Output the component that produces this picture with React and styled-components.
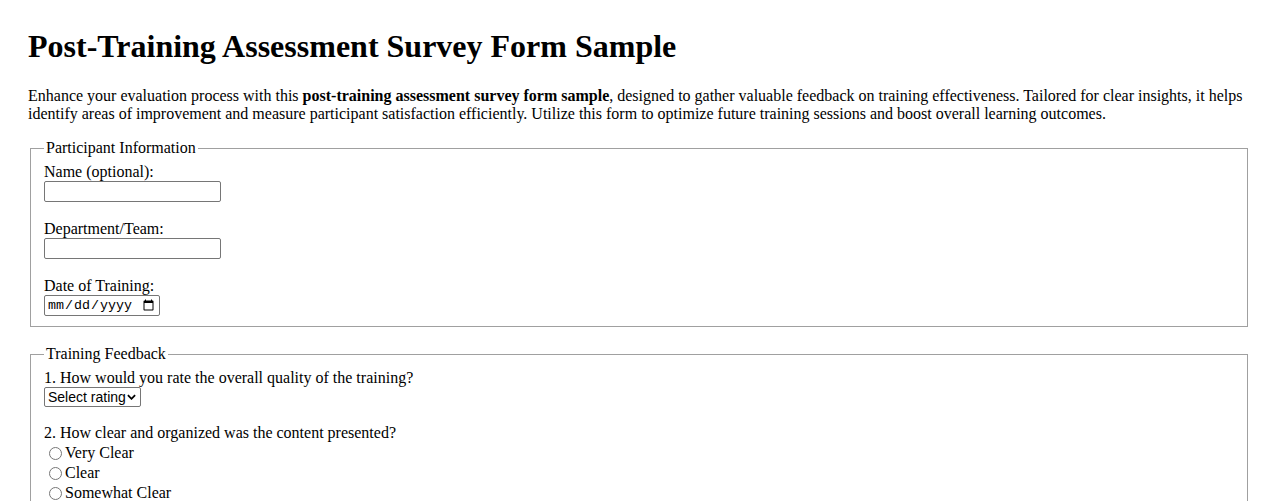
import React from 'react'
import styled, { createGlobalStyle } from 'styled-components';

const GlobalStyle = createGlobalStyle`
  body {
    margin: 0;
    padding: 28px;
    background: #fff;
    color: #000;
    font-family: "Liberation Serif", "Times New Roman", serif;
    font-size: 16px;
  }
`;

const App = () => {
    return (
        <>
            <GlobalStyle />
            <Page>
                <Title>Post-Training Assessment Survey Form Sample</Title>
                <Intro>
                    Enhance your evaluation process with this <strong>post-training assessment survey form sample</strong>, designed to gather valuable feedback on training effectiveness. Tailored for clear insights, it helps identify areas of improvement and measure participant satisfaction efficiently. Utilize this form to optimize future training sessions and boost overall learning outcomes.
                </Intro>
                <form>
                    <Section>
                        <Legend>Participant Information</Legend>
                        <Field>
                            <Label htmlFor="name">Name (optional):</Label>
                            <TextInput id="name" type="text" />
                        </Field>
                        <Field>
                            <Label htmlFor="dept">Department/Team:</Label>
                            <TextInput id="dept" type="text" />
                        </Field>
                        <Field>
                            <Label htmlFor="date">Date of Training:</Label>
                            <DateInput id="date" type="date" />
                        </Field>
                    </Section>

                    <Section>
                        <Legend>Training Feedback</Legend>
                        <Field>
                            <Label htmlFor="quality">1. How would you rate the overall quality of the training?</Label>
                            <SelectWrap>
                                <Select id="quality" defaultValue="">
                                    <option value="">Select rating</option>
                                    <option value="5">Excellent</option>
                                    <option value="4">Good</option>
                                    <option value="3">Average</option>
                                    <option value="2">Poor</option>
                                </Select>
                                <Chevron viewBox="0 0 10 6" aria-hidden="true">
                                    <path d="M1 1l4 4 4-4" fill="none" stroke="#000" strokeWidth="2" />
                                </Chevron>
                            </SelectWrap>
                        </Field>
                        <Field>
                            <Label as="div">2. How clear and organized was the content presented?</Label>
                            {['Very Clear', 'Clear', 'Somewhat Clear', 'Not Clear'].map(opt => (
                                <RadioLabel key={opt}>
                                    <Radio type="radio" name="clarity" value={opt} />
                                    {opt}
                                </RadioLabel>
                            ))}
                        </Field>
                    </Section>
                </form>
            </Page>
        </>
    );
};

export default App;


const Page = styled.div`
  width: 100%;
`;

const Title = styled.h1`
  font-size: 32px;
  line-height: 37px;
  margin: 0 0 22px;
  font-weight: bold;
`;

const Intro = styled.p`
  margin: 0 0 16px;
  line-height: 18px;
`;

const Section = styled.fieldset`
  margin: 0 2px 18px;
  padding: 6px 13px 10px;
  border: 1px solid #a0a0a0;
  line-height: 18px;
`;

const Legend = styled.legend`
  padding: 0 2px;
  line-height: 18px;
`;

const Field = styled.div`
  margin-bottom: 18px;

  &:last-child {
    margin-bottom: 0;
  }
`;

const Label = styled.label`
  display: block;
  line-height: 18px;
`;

const TextInput = styled.input`
  display: block;
  box-sizing: border-box;
  width: 177px;
  height: 21px;
  margin: 0;
  padding: 1px 2px;
  border: 1px solid #767676;
  border-radius: 2px;
  font-family: "Liberation Sans", Arial, sans-serif;
  font-size: 13.33px;
`;

const DateInput = styled(TextInput)`
  width: 116px;
  font-family: "Liberation Mono", monospace;
`;

const SelectWrap = styled.div`
  position: relative;
  width: 97px;
  height: 20px;
  margin-bottom: -1px;
`;

const Select = styled.select`
  appearance: none;
  -webkit-appearance: none;
  display: block;
  box-sizing: border-box;
  width: 97px;
  height: 20px;
  margin: 0;
  padding: 0 14px 0 3px;
  border: 1px solid #767676;
  border-radius: 2px;
  background: #fff;
  color: #000;
  font-family: "Liberation Sans", Arial, sans-serif;
  font-size: 14px;
`;

const Chevron = styled.svg`
  position: absolute;
  right: 5px;
  top: 7px;
  width: 9px;
  height: 6px;
  pointer-events: none;
`;

const RadioLabel = styled.label`
  display: flex;
  align-items: center;
  height: 20px;
  margin-top: 1px;

  & + & {
    margin-top: 0;
  }
`;

const Radio = styled.input`
  width: 13px;
  height: 13px;
  margin: 0 3px 0 5px;
`;
